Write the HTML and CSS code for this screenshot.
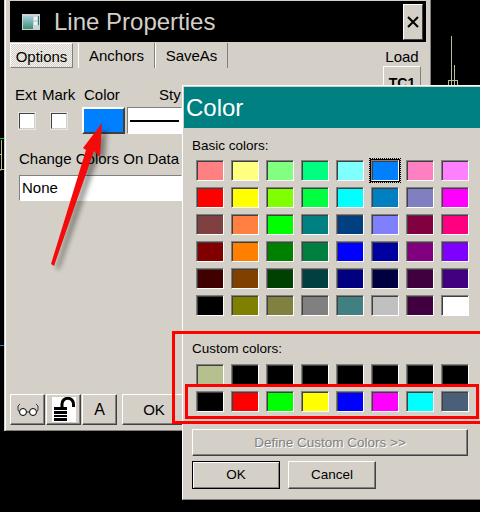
FILE: index.html
```html
<!DOCTYPE html>
<html lang="en">

<head>
    <meta charset="UTF-8">
    <title>Line Properties</title>
    <link rel="stylesheet" href="styles.css">
</head>

<body>
    <div class="desktop">
        <svg class="traces" width="480" height="512" viewBox="0 0 480 512">
            <path d="M0 138.500H4" stroke="#0c0" fill="none"/>
            <path d="M1.500 140V170H0M0 154.500H2M0 169.500H4" stroke="#b6c08e" fill="none"/>
            <path d="M451.500 36V85M454.500 65V85M448.500 85V80M448 80.500H458M457.500 80V85" stroke="#b6c08e" fill="none"/>
            <path d="M0 345.500H4" stroke="#08f" fill="none"/>
        </svg>

        <!-- Line Properties -->
        <div class="props">
            <div class="props-title">
                <svg class="app-icon" width="18" height="16" viewBox="0 0 18 16">
                    <defs>
                        <linearGradient id="panel" x1="0" y1="0" x2="0" y2="1">
                            <stop offset="0" stop-color="#a6cfe0"/>
                            <stop offset="1" stop-color="#3f8f70"/>
                        </linearGradient>
                    </defs>
                    <rect width="18" height="16" fill="#c9d4d6"/>
                    <rect x="1" y="2" width="10" height="13" fill="url(#panel)"/>
                    <rect x="12" y="3" width="3" height="3" fill="#eef2f2"/>
                    <rect x="12" y="8" width="3" height="3" fill="#eef2f2"/>
                    <rect x="16" y="2" width="1" height="9" fill="#1f7f78"/>
                </svg>
                <span class="props-name">Line Properties</span>
                <div class="close">
                    <svg width="12" height="12" viewBox="0 0 12 12">
                        <path d="M1 1L11 11M11 1L1 11" stroke="#000" stroke-width="2" fill="none"/>
                    </svg>
                </div>
            </div>
            <div class="tabs">
                <div class="tab tab-active">Options</div>
                <div class="tab tab-anchors">Anchors</div>
                <div class="tab tab-saveas">SaveAs</div>
                <div class="load">
                    <span>Load</span>
                    <div class="tc1">TC1</div>
                </div>
            </div>
            <div class="options">
                <div class="opt-labels">
                    <span class="lbl-ext">Ext</span>
                    <span class="lbl-mark">Mark</span>
                    <span class="lbl-color">Color</span>
                    <span>Sty</span>
                </div>
                <div class="opt-row">
                    <div class="check"></div>
                    <div class="check"></div>
                    <div class="color-btn"></div>
                    <div class="line-btn"><div></div></div>
                </div>
                <div class="change-lbl">Change Colors On Data</div>
                <div class="none-input">None</div>
            </div>
            <div class="props-foot">
                <div class="btn foot-btn">
                    <svg width="22" height="14" viewBox="0 0 22 14">
                        <circle cx="6" cy="9" r="3.500" fill="#fff" stroke="#000"/>
                        <circle cx="16" cy="9" r="3.500" fill="#fff" stroke="#000"/>
                        <path d="M9.500 9H12.500M2.500 9L1 7V3L3 1M19.500 9L21 7V3L19 1" stroke="#335" fill="none"/>
                    </svg>
                </div>
                <div class="btn foot-btn">
                    <svg class="lock" width="24" height="25" viewBox="0 0 24 25">
                        <rect width="24" height="25" fill="#fff"/>
                        <path d="M2 10H15V24H2Z" fill="#000"/>
                        <path d="M2 13.500H15M2 17.500H15M2 20.500H15" stroke="#fff"/>
                        <path d="M10 10V7A5 5 0 0 1 21.500 7V10" fill="none" stroke="#000" stroke-width="3"/>
                    </svg>
                </div>
                <div class="btn foot-btn foot-a">A</div>
                <div class="btn foot-ok">OK</div>
            </div>
        </div>

        <!-- Color -->
        <div class="color-dlg">
            <div class="color-title">Color</div>
            <div class="color-body">
                <div class="grid-lbl">Basic colors:</div>
                <div class="swatches">
                    <div class="sw" style="background:#ff8080"></div>
                    <div class="sw" style="background:#ffff80"></div>
                    <div class="sw" style="background:#80ff80"></div>
                    <div class="sw" style="background:#00ff80"></div>
                    <div class="sw" style="background:#80ffff"></div>
                    <div class="sw sw-picked" style="background:#0080ff"></div>
                    <div class="sw" style="background:#ff80c0"></div>
                    <div class="sw" style="background:#ff80ff"></div>

                    <div class="sw" style="background:#ff0000"></div>
                    <div class="sw" style="background:#ffff00"></div>
                    <div class="sw" style="background:#80ff00"></div>
                    <div class="sw" style="background:#00ff40"></div>
                    <div class="sw" style="background:#00ffff"></div>
                    <div class="sw" style="background:#0080c0"></div>
                    <div class="sw" style="background:#8080c0"></div>
                    <div class="sw" style="background:#ff00ff"></div>

                    <div class="sw" style="background:#804040"></div>
                    <div class="sw" style="background:#ff8040"></div>
                    <div class="sw" style="background:#00ff00"></div>
                    <div class="sw" style="background:#008080"></div>
                    <div class="sw" style="background:#004080"></div>
                    <div class="sw" style="background:#8080ff"></div>
                    <div class="sw" style="background:#800040"></div>
                    <div class="sw" style="background:#ff0080"></div>

                    <div class="sw" style="background:#800000"></div>
                    <div class="sw" style="background:#ff8000"></div>
                    <div class="sw" style="background:#008000"></div>
                    <div class="sw" style="background:#008040"></div>
                    <div class="sw" style="background:#0000ff"></div>
                    <div class="sw" style="background:#0000a0"></div>
                    <div class="sw" style="background:#800080"></div>
                    <div class="sw" style="background:#8000ff"></div>

                    <div class="sw" style="background:#400000"></div>
                    <div class="sw" style="background:#804000"></div>
                    <div class="sw" style="background:#004000"></div>
                    <div class="sw" style="background:#004040"></div>
                    <div class="sw" style="background:#000080"></div>
                    <div class="sw" style="background:#000040"></div>
                    <div class="sw" style="background:#400040"></div>
                    <div class="sw" style="background:#400080"></div>

                    <div class="sw" style="background:#000000"></div>
                    <div class="sw" style="background:#808000"></div>
                    <div class="sw" style="background:#808040"></div>
                    <div class="sw" style="background:#808080"></div>
                    <div class="sw" style="background:#408080"></div>
                    <div class="sw" style="background:#c0c0c0"></div>
                    <div class="sw" style="background:#400040"></div>
                    <div class="sw" style="background:#ffffff"></div>
                </div>
                <div class="grid-lbl custom-lbl">Custom colors:</div>
                <div class="swatches">
                    <div class="sw" style="background:#b6c08e"></div>
                    <div class="sw" style="background:#000000"></div>
                    <div class="sw" style="background:#000000"></div>
                    <div class="sw" style="background:#000000"></div>
                    <div class="sw" style="background:#000000"></div>
                    <div class="sw" style="background:#000000"></div>
                    <div class="sw" style="background:#000000"></div>
                    <div class="sw" style="background:#000000"></div>

                    <div class="sw" style="background:#000000"></div>
                    <div class="sw" style="background:#ff0000"></div>
                    <div class="sw" style="background:#00ff00"></div>
                    <div class="sw" style="background:#ffff00"></div>
                    <div class="sw" style="background:#0000ff"></div>
                    <div class="sw" style="background:#ff00ff"></div>
                    <div class="sw" style="background:#00ffff"></div>
                    <div class="sw" style="background:#4a6078"></div>
                </div>
                <div class="btn define-btn">Define Custom Colors &gt;&gt;</div>
                <div class="dlg-actions">
                    <div class="btn dlg-btn dlg-default">OK</div>
                    <div class="btn dlg-btn">Cancel</div>
                </div>
            </div>
        </div>

        <!-- annotations drawn over the screenshot -->
        <div class="mark-outer"></div>
        <div class="mark-inner"></div>
        <svg class="arrow" width="480" height="512" viewBox="0 0 480 512">
            <defs>
                <filter id="soft" x="-30%" y="-30%" width="160%" height="160%">
                    <feGaussianBlur stdDeviation="2.500"/>
                </filter>
            </defs>
            <path d="M102 123L83 148L86 150L51 264L54 266L94 151L100 157Z" transform="translate(5 4)" fill="#000" opacity="0.4" filter="url(#soft)"/>
            <path d="M102 123L83 148L86 150L51 264L54 266L94 151L100 157Z" fill="#f40a0a"/>
        </svg>
    </div>
</body>

</html>
```

FILE: styles.css
```css
* {
    margin: 0;
    padding: 0;
    box-sizing: border-box;
}

body {
    font-family: 'Liberation Sans', Arial, sans-serif;
    color: #000;
    background-color: #000;
    overflow: hidden;
}

.desktop {
    position: relative;
    width: 480px;
    height: 512px;
    overflow: hidden;
}

.traces,
.arrow {
    position: absolute;
    left: 0;
    top: 0;
}

/* Line Properties window */

.props {
    position: absolute;
    left: 5px;
    top: 0;
    width: 426px;
    height: 431px;
    display: flex;
    flex-direction: column;
    padding: 1px 4px 5px 4px;
    background-color: #d4d0c8;
    border-left: 1px solid #fff;
    border-right: 1px solid #808080;
    border-bottom: 1px solid #808080;
    box-shadow: -1px 0 0 #d4d0c8;
}

.props-title {
    display: flex;
    align-items: center;
    height: 41px;
    flex-shrink: 0;
    padding: 0 3px 0 12px;
    background-color: #000;
    color: #d4d0c8;
}

.props-name {
    flex: 1;
    margin-left: 14px;
    font-size: 24px;
}

.close {
    display: flex;
    align-items: center;
    justify-content: center;
    width: 20px;
    height: 36px;
    background-color: #d4d0c8;
    border: 1px solid;
    border-color: #fff #404040 #404040 #fff;
}

.tabs {
    display: flex;
    height: 47px;
    flex-shrink: 0;
    font-size: 15px;
}

.tab {
    height: 25px;
    margin-top: 1px;
    text-align: center;
    line-height: 25px;
    border-right: 1px solid #808080;
    border-left: 1px solid #fff;
}

.tab-active {
    width: 63px;
    line-height: 26px;
    border: 1px solid;
    border-color: #fff #808080 #808080 #fff;
    background: repeating-conic-gradient(#f4f3f0 0 25%, #d4d0c8 0 50%) 0 0 / 2px 2px;
}

.tab-anchors {
    width: 77px;
    margin-left: 5px;
}

.tab-saveas {
    width: 73px;
}

.load {
    margin-left: 155px;
    margin-top: 6px;
    text-align: center;
}

.tc1 {
    width: 38px;
    height: 34px;
    margin-top: 1px;
    font-weight: bold;
    font-size: 14px;
    line-height: 32px;
    border: 1px solid;
    border-color: #fff #808080 #808080 #fff;
}

.options {
    flex: 1;
    font-size: 15px;
    padding-left: 5px;
}

.opt-labels {
    display: flex;
    height: 12px;
    line-height: 12px;
}

.lbl-ext {
    width: 27px;
}

.lbl-mark {
    width: 42px;
}

.lbl-color {
    width: 75px;
}

.opt-row {
    display: flex;
    align-items: center;
    height: 27px;
    margin-top: 6px;
    padding-left: 4px;
}

.check {
    width: 16px;
    height: 16px;
    margin-right: 16px;
    background-color: #fff;
    border: 1px solid;
    border-color: #404040 #d4d0c8 #d4d0c8 #404040;
    box-shadow: 0 0 0 1px #e8e6e0;
}

.check + .check {
    margin-right: 15px;
}

.color-btn {
    width: 43px;
    height: 27px;
    background-color: #0080ff;
    border: 2px solid;
    border-color: #fff #404040 #404040 #fff;
}

.line-btn {
    width: 55px;
    height: 27px;
    margin-left: 2px;
    padding: 12px 2px 0;
    background-color: #fff;
    border: 1px solid;
    border-color: #808080 #fff #fff #808080;
}

.line-btn div {
    height: 2px;
    background-color: #000;
}

.change-lbl {
    margin: 16px 0 0 4px;
    line-height: 17px;
}

.none-input {
    width: 163px;
    height: 26px;
    margin: 8px 0 0 4px;
    padding-left: 2px;
    line-height: 24px;
    background-color: #fff;
    border: 1px solid;
    border-color: #808080 #fff #fff #808080;
}

.btn {
    background-color: #d4d0c8;
    text-align: center;
    border: 1px solid;
    border-color: #fff #404040 #404040 #fff;
    box-shadow: inset -1px -1px 0 #808080;
}

.props-foot {
    display: flex;
    flex-shrink: 0;
    height: 31px;
    gap: 1px;
}

.foot-btn {
    display: flex;
    align-items: center;
    justify-content: center;
    width: 35px;
    font-size: 16px;
}

.foot-a {
    margin-right: 4px;
}

.foot-ok {
    width: 64px;
    font-size: 15px;
    line-height: 29px;
}

/* Color dialog */

.color-dlg {
    position: absolute;
    left: 182px;
    top: 85px;
    width: 310px;
    height: 415px;
    padding: 1px;
    background-color: #d4d0c8;
    border-left: 1px solid #fff;
    border-top: 1px solid #fff;
    border-bottom: 1px solid #808080;
}

.color-title {
    height: 41px;
    padding-left: 2px;
    background-color: #008080;
    color: #fff;
    font-size: 24px;
    line-height: 41px;
}

.color-body {
    padding-left: 8px;
    font-size: 13.5px;
}

.grid-lbl {
    height: 32px;
    padding-top: 11px;
    line-height: 14px;
}

.custom-lbl {
    height: 48px;
    padding-top: 26px;
}

.swatches {
    display: grid;
    grid-template-columns: repeat(8, 28px);
    grid-auto-rows: 21px;
    column-gap: 7px;
    row-gap: 6px;
    margin-left: 4px;
}

.sw {
    border: 1px solid;
    border-color: #808080 #fff #fff #808080;
    box-shadow: inset 1px 1px 0 #404040;
}

.sw-picked {
    outline: 1px dotted #000;
    outline-offset: 1px;
    box-shadow: inset 1px 1px 0 #404040, 0 0 0 1px #000;
}

.define-btn {
    width: 276px;
    height: 27px;
    margin-top: 17px;
    line-height: 25px;
    color: #808080;
    text-shadow: 1px 1px 0 #fff;
}

.dlg-actions {
    display: flex;
    gap: 8px;
    margin-top: 5px;
}

.dlg-btn {
    width: 88px;
    height: 28px;
    line-height: 26px;
}

.dlg-default {
    border-color: #000;
    box-shadow: inset 1px 1px 0 #fff, inset -1px -1px 0 #808080;
}

/* red annotation boxes */

.mark-outer,
.mark-inner {
    position: absolute;
    border: 3px solid #f00;
}

.mark-outer {
    left: 172px;
    top: 331px;
    width: 320px;
    height: 93px;
}

.mark-inner {
    left: 185px;
    top: 384px;
    width: 294px;
    height: 35px;
}
```
